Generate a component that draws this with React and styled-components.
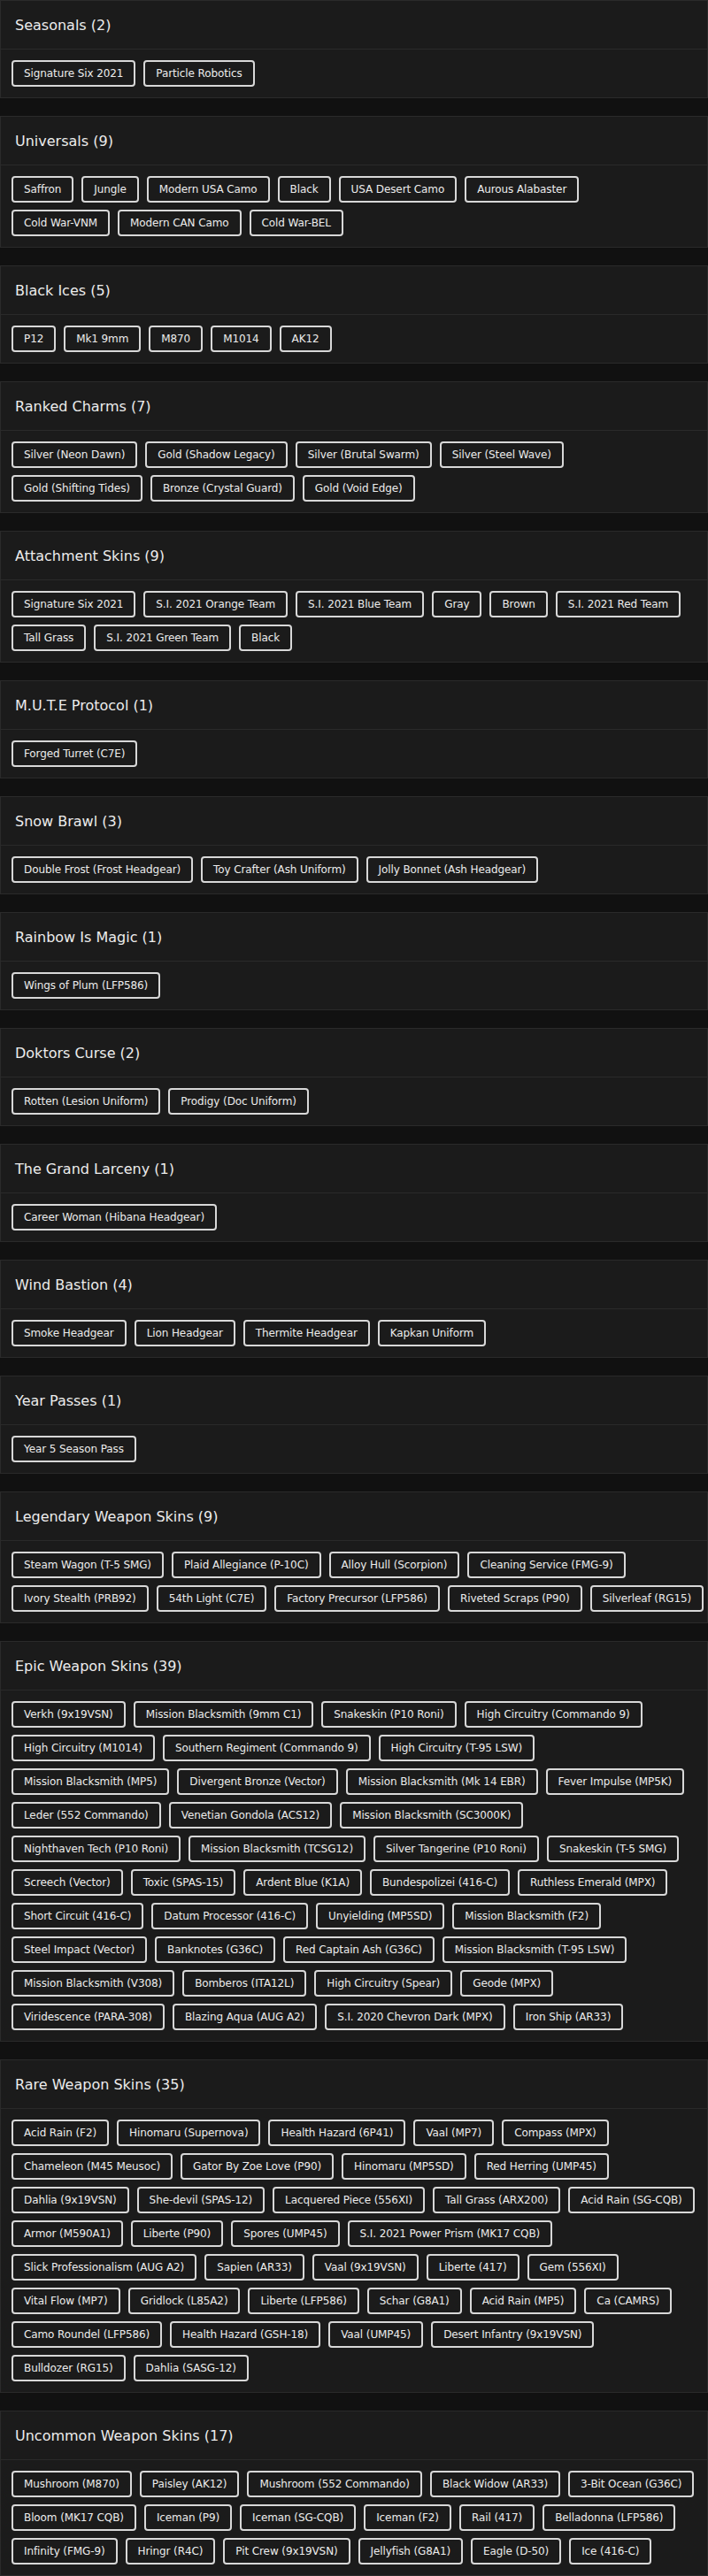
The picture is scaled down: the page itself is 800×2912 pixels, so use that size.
import React from 'react'
import styled, { createGlobalStyle } from 'styled-components'

const GlobalStyle = createGlobalStyle`
  html, body {
    margin: 0;
    padding: 0;
    background: #111111;
  }
  body {
    font-family: 'DejaVu Sans', 'Noto Sans', sans-serif;
    color: #e6e6e6;
  }
`

// each section lists its chips row by row, the way the reference wraps them
const sections = [
  { title: 'Seasonals', rows: [['Signature Six 2021', 'Particle Robotics']] },
  {
    title: 'Universals',
    rows: [
      ['Saffron', 'Jungle', 'Modern USA Camo', 'Black', 'USA Desert Camo', 'Aurous Alabaster'],
      ['Cold War-VNM', 'Modern CAN Camo', 'Cold War-BEL'],
    ],
  },
  { title: 'Black Ices', rows: [['P12', 'Mk1 9mm', 'M870', 'M1014', 'AK12']] },
  {
    title: 'Ranked Charms',
    rows: [
      ['Silver (Neon Dawn)', 'Gold (Shadow Legacy)', 'Silver (Brutal Swarm)', 'Silver (Steel Wave)'],
      ['Gold (Shifting Tides)', 'Bronze (Crystal Guard)', 'Gold (Void Edge)'],
    ],
  },
  {
    title: 'Attachment Skins',
    rows: [
      ['Signature Six 2021', 'S.I. 2021 Orange Team', 'S.I. 2021 Blue Team', 'Gray', 'Brown', 'S.I. 2021 Red Team'],
      ['Tall Grass', 'S.I. 2021 Green Team', 'Black'],
    ],
  },
  { title: 'M.U.T.E Protocol', rows: [['Forged Turret (C7E)']] },
  { title: 'Snow Brawl', rows: [['Double Frost (Frost Headgear)', 'Toy Crafter (Ash Uniform)', 'Jolly Bonnet (Ash Headgear)']] },
  { title: 'Rainbow Is Magic', rows: [['Wings of Plum (LFP586)']] },
  { title: 'Doktors Curse', rows: [['Rotten (Lesion Uniform)', 'Prodigy (Doc Uniform)']] },
  { title: 'The Grand Larceny', rows: [['Career Woman (Hibana Headgear)']] },
  { title: 'Wind Bastion', rows: [['Smoke Headgear', 'Lion Headgear', 'Thermite Headgear', 'Kapkan Uniform']] },
  { title: 'Year Passes', rows: [['Year 5 Season Pass']] },
  {
    title: 'Legendary Weapon Skins',
    rows: [
      ['Steam Wagon (T-5 SMG)', 'Plaid Allegiance (P-10C)', 'Alloy Hull (Scorpion)', 'Cleaning Service (FMG-9)'],
      ['Ivory Stealth (PRB92)', '54th Light (C7E)', 'Factory Precursor (LFP586)', 'Riveted Scraps (P90)', 'Silverleaf (RG15)'],
    ],
  },
  {
    title: 'Epic Weapon Skins',
    rows: [
      ['Verkh (9x19VSN)', 'Mission Blacksmith (9mm C1)', 'Snakeskin (P10 Roni)', 'High Circuitry (Commando 9)'],
      ['High Circuitry (M1014)', 'Southern Regiment (Commando 9)', 'High Circuitry (T-95 LSW)'],
      ['Mission Blacksmith (MP5)', 'Divergent Bronze (Vector)', 'Mission Blacksmith (Mk 14 EBR)', 'Fever Impulse (MP5K)'],
      ['Leder (552 Commando)', 'Venetian Gondola (ACS12)', 'Mission Blacksmith (SC3000K)'],
      ['Nighthaven Tech (P10 Roni)', 'Mission Blacksmith (TCSG12)', 'Silver Tangerine (P10 Roni)', 'Snakeskin (T-5 SMG)'],
      ['Screech (Vector)', 'Toxic (SPAS-15)', 'Ardent Blue (K1A)', 'Bundespolizei (416-C)', 'Ruthless Emerald (MPX)'],
      ['Short Circuit (416-C)', 'Datum Processor (416-C)', 'Unyielding (MP5SD)', 'Mission Blacksmith (F2)'],
      ['Steel Impact (Vector)', 'Banknotes (G36C)', 'Red Captain Ash (G36C)', 'Mission Blacksmith (T-95 LSW)'],
      ['Mission Blacksmith (V308)', 'Bomberos (ITA12L)', 'High Circuitry (Spear)', 'Geode (MPX)'],
      ['Viridescence (PARA-308)', 'Blazing Aqua (AUG A2)', 'S.I. 2020 Chevron Dark (MPX)', 'Iron Ship (AR33)'],
    ],
  },
  {
    title: 'Rare Weapon Skins',
    rows: [
      ['Acid Rain (F2)', 'Hinomaru (Supernova)', 'Health Hazard (6P41)', 'Vaal (MP7)', 'Compass (MPX)'],
      ['Chameleon (M45 Meusoc)', 'Gator By Zoe Love (P90)', 'Hinomaru (MP5SD)', 'Red Herring (UMP45)'],
      ['Dahlia (9x19VSN)', 'She-devil (SPAS-12)', 'Lacquered Piece (556XI)', 'Tall Grass (ARX200)', 'Acid Rain (SG-CQB)'],
      ['Armor (M590A1)', 'Liberte (P90)', 'Spores (UMP45)', 'S.I. 2021 Power Prism (MK17 CQB)'],
      ['Slick Professionalism (AUG A2)', 'Sapien (AR33)', 'Vaal (9x19VSN)', 'Liberte (417)', 'Gem (556XI)'],
      ['Vital Flow (MP7)', 'Gridlock (L85A2)', 'Liberte (LFP586)', 'Schar (G8A1)', 'Acid Rain (MP5)', 'Ca (CAMRS)'],
      ['Camo Roundel (LFP586)', 'Health Hazard (GSH-18)', 'Vaal (UMP45)', 'Desert Infantry (9x19VSN)'],
      ['Bulldozer (RG15)', 'Dahlia (SASG-12)'],
    ],
  },
  {
    title: 'Uncommon Weapon Skins',
    rows: [
      ['Mushroom (M870)', 'Paisley (AK12)', 'Mushroom (552 Commando)', 'Black Widow (AR33)', '3-Bit Ocean (G36C)'],
      ['Bloom (MK17 CQB)', 'Iceman (P9)', 'Iceman (SG-CQB)', 'Iceman (F2)', 'Rail (417)', 'Belladonna (LFP586)'],
      ['Infinity (FMG-9)', 'Hringr (R4C)', 'Pit Crew (9x19VSN)', 'Jellyfish (G8A1)', 'Eagle (D-50)', 'Ice (416-C)'],
    ],
  },
]

const Page = styled.main`
  display: flex;
  flex-direction: column;
  gap: 20px;
`

const Card = styled.section`
  background: #1b1b1b;
  border: 1px solid #2a2a2a;
`

const CardHeader = styled.header`
  height: 54px;
  display: flex;
  align-items: center;
  padding: 0 16px;
  border-bottom: 1px solid #2a2a2a;
`

const Title = styled.h2`
  margin: 0;
  font-size: 16px;
  font-weight: normal;
  color: #ececec;
`

const ChipList = styled.div`
  display: flex;
  flex-direction: column;
  gap: 8px;
  padding: 12px;
`

const ChipRow = styled.div`
  display: flex;
  gap: 9px;
`

const Chip = styled.span`
  box-sizing: border-box;
  height: 30px;
  display: inline-flex;
  align-items: center;
  padding: 0 12px;
  border: 2px solid #d8d8d8;
  border-radius: 4px;
  font-size: 12px;
  letter-spacing: -0.1px;
  color: #ececec;
  white-space: nowrap;
`

const Section = ({ title, rows }) => {
  const count = rows.reduce((n, r) => n + r.length, 0)
  return (
    <Card>
      <CardHeader>
        <Title>
          {title} ({count})
        </Title>
      </CardHeader>
      <ChipList>
        {rows.map((row, i) => (
          <ChipRow key={i}>
            {row.map((name, j) => (
              <Chip key={j}>{name}</Chip>
            ))}
          </ChipRow>
        ))}
      </ChipList>
    </Card>
  )
}

const App = () => (
  <>
    <GlobalStyle />
    <Page>
      {sections.map((s) => (
        <Section key={s.title} title={s.title} rows={s.rows} />
      ))}
    </Page>
  </>
)

export default App
